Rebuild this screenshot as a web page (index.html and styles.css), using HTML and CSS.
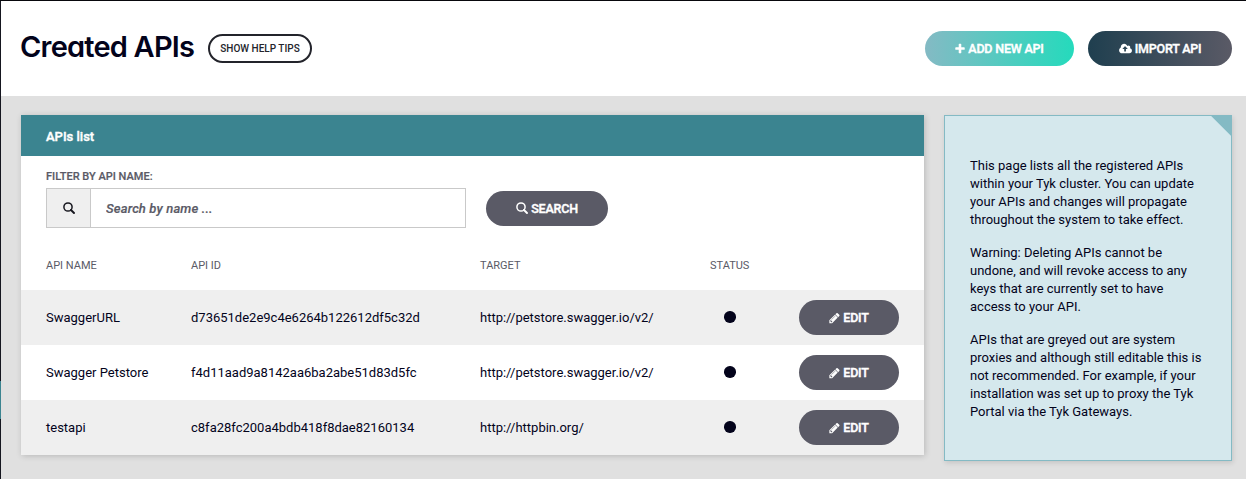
FILE: index.html
```html
<!DOCTYPE html>
<html lang="en">
<head>
<meta charset="utf-8">
<title>Created APIs</title>
<link rel="stylesheet" href="styles.css">
</head>
<body>
<svg class="sprite" aria-hidden="true">
  <symbol id="plus" viewBox="192 0 1408 1792"><path d="M1600 736v192q0 40-28 68t-68 28h-416v416q0 40-28 68t-68 28h-192q-40 0-68-28t-28-68v-416h-416q-40 0-68-28t-28-68v-192q0-40 28-68t68-28h416v-416q0-40 28-68t68-28h192q40 0 68 28t28 68v416h416q40 0 68 28t28 68z"/></symbol>
  <symbol id="search" viewBox="0 0 12 12"><circle cx="5" cy="5" r="4.100" fill="none" stroke="currentColor" stroke-width="1.500"/><path d="M8 8l3 3" fill="none" stroke="currentColor" stroke-width="1.900" stroke-linecap="round"/></symbol>
  <symbol id="pencil" viewBox="128 0 1536 1792"><path d="M491 1536l91-91-235-235-91 91v107h128v128h107zm523-928q0-22-22-22-10 0-17 7l-542 542q-7 7-7 17 0 22 22 22 10 0 17-7l542-542q7-7 7-17zm-54-192l416 416-832 832h-416v-416zm683 96q0 53-37 90l-166 166-416-416 166-165q36-38 90-38 53 0 91 38l235 234q37 39 37 91z"/></symbol>
  <symbol id="cloud" viewBox="0 0 1920 1792"><path d="M1280 864q0-14-9-23l-352-352q-9-9-23-9t-23 9l-351 351q-10 12-10 24 0 14 9 23t23 9h224v352q0 13 9.500 22.500t22.500 9.500h192q13 0 22.500-9.500t9.500-22.500v-352h224q13 0 22.500-9.500t9.500-22.500zm640 288q0 159-112.500 271.500t-271.500 112.500h-1088q-185 0-316.500-131.500t-131.500-316.500q0-130 70-240t188-165q-2-30-2-43 0-212 150-362t362-150q156 0 285.500 87t188.500 231q71-62 166-62 106 0 181 75t75 181q0 76-41 138 130 31 213.500 135.500t83.500 238.500z"/></symbol>
</svg>
<div class="page">
  <div class="rail"><span class="rail-active"></span></div>
  <div class="content">
    <header class="header">
      <h1 class="title">Created APIs</h1>
      <button class="help">SHOW HELP TIPS</button>
      <div class="actions">
        <button class="btn btn-add"><svg class="icon icon-plus"><use href="#plus"/></svg><span>ADD NEW API</span></button>
        <button class="btn btn-import"><svg class="icon icon-cloud"><use href="#cloud"/></svg><span>IMPORT API</span></button>
      </div>
    </header>
    <main class="main">
      <section class="panel">
        <h2 class="panel-head">APIs list</h2>
        <div class="filter">
          <label class="label" for="q">FILTER BY API NAME:</label>
          <div class="filter-row">
            <div class="field">
              <span class="addon"><svg class="icon icon-search"><use href="#search"/></svg></span>
              <input class="input" id="q" type="text" placeholder="Search by name ...">
            </div>
            <button class="btn btn-search"><svg class="icon icon-search"><use href="#search"/></svg><span>SEARCH</span></button>
          </div>
        </div>
        <div class="row row-head"><span>API NAME</span><span>API ID</span><span>TARGET</span><span>STATUS</span></div>
        <div class="row shaded"><span>SwaggerURL</span><span class="id">d73651de2e9c4e6264b122612df5c32d</span><span class="url">http://petstore.swagger.io/v2/</span><i class="dot"></i><button class="btn btn-edit"><svg class="icon icon-pencil"><use href="#pencil"/></svg><span>EDIT</span></button></div>
        <div class="row"><span>Swagger Petstore</span><span class="id">f4d11aad9a8142aa6ba2abe51d83d5fc</span><span class="url">http://petstore.swagger.io/v2/</span><i class="dot"></i><button class="btn btn-edit"><svg class="icon icon-pencil"><use href="#pencil"/></svg><span>EDIT</span></button></div>
        <div class="row shaded"><span>testapi</span><span class="id">c8fa28fc200a4bdb418f8dae82160134</span><span class="url">http://httpbin.org/</span><i class="dot"></i><button class="btn btn-edit"><svg class="icon icon-pencil"><use href="#pencil"/></svg><span>EDIT</span></button></div>
      </section>
      <aside class="note">
        <p>This page lists all the registered APIs<br>within your Tyk cluster. You can update<br>your APIs and changes will propagate<br>throughout the system to take effect.</p>
        <p>Warning: Deleting APIs cannot be<br>undone, and will revoke access to any<br>keys that are currently set to have<br>access to your API.</p>
        <p>APIs that are greyed out are system<br>proxies and although still editable this is<br>not recommended. For example, if your<br>installation was set up to proxy the Tyk<br>Portal via the Tyk Gateways.</p>
      </aside>
    </main>
  </div>
</div>
</body>
</html>
```
FILE: styles.css
```css
* { box-sizing: border-box; }
body { margin: 0; font-family: Roboto, "Liberation Sans", sans-serif; font-size: 13px; color: #03031b; overflow: hidden; }
.sprite { position: absolute; width: 0; height: 0; }
.page { display: flex; height: 479px; border-top: 1px solid #08080c; background: #e0e0e0; }
.rail { width: 1px; background: #15161f; padding-top: 380px; }
.rail-active { display: block; height: 38px; background: #3b8490; }
.content { flex: 1; min-width: 0; }
.header { display: flex; align-items: center; height: 95px; padding: 0 14px 0 19px; background: #fff; }
.title { margin: 0; width: 174px; font: 600 29px/36px Inter, Roboto, sans-serif; font-feature-settings: "cv11" 1; white-space: nowrap; letter-spacing: -0.8px; padding-bottom: 4px; }
.help { width: 104px; height: 29px; margin-left: 14px; padding: 0; border: 2px solid #23242b; border-radius: 15px; background: #fff; color: #23242b; font: 500 10px Roboto, sans-serif; }
.actions { display: flex; gap: 14px; margin-left: auto; }
.btn { display: flex; align-items: center; justify-content: center; gap: 3px; height: 35px; padding: 0; border: 0; border-radius: 18px; background: #5a5a66; color: #fff; font: 500 12.5px Roboto, sans-serif; letter-spacing: -0.2px; -webkit-text-stroke: 0.4px; }
.icon { display: block; height: 12px; fill: currentColor; }
.icon-plus { width: 10px; }
.icon-cloud { width: 13px; }
.icon-search { width: 12px; }
.icon-pencil { width: 11px; }
.btn-add { width: 149px; background: linear-gradient(90deg, #84bac4, #25dabc); }
.btn-import { width: 144px; background: linear-gradient(90deg, #1f3f4f, #5a5a66); }
.main { display: flex; align-items: flex-start; gap: 20px; padding: 19px 14px 0 20px; }
.panel { width: 903px; background: #fff; box-shadow: 1px 1px 6px rgba(0,0,0,.18); }
.panel-head { margin: 0; height: 41px; padding-left: 25px; background: #3b8490; color: #fff; font-size: 13px; line-height: 43px; font-weight: 500; -webkit-text-stroke: 0.4px; }
.filter { padding: 12px 25px 0; }
.label { display: block; height: 20px; font-size: 11px; line-height: 17px; font-weight: 500; color: #5a5a66; -webkit-text-stroke: 0.2px; }
.filter-row { display: flex; align-items: center; gap: 20px; }
.field { display: flex; width: 420px; height: 40px; border: 1px solid #c9c9c9; }
.addon { display: flex; align-items: center; justify-content: center; width: 44px; border-right: 1px solid #c9c9c9; background: #efefef; color: #17171f; }
.input { flex: 1; min-width: 0; border: 0; padding: 0 15px; font: italic 500 13px Roboto, sans-serif; letter-spacing: 0.15px; -webkit-text-stroke: 0.2px; background: #fff; }
.input::placeholder { color: #5a5a66; opacity: 1; }
.btn-search { width: 122px; }
.row { display: grid; grid-template-columns: 145px 289px 230px 89px 100px; align-items: center; height: 55px; padding: 0 25px; }
.row-head { height: 62px; padding-top: 13px; color: #5a5a66; font-size: 11px; }
.shaded { background: #efefef; }
.dot { width: 11.5px; height: 11.5px; margin-left: 14px; margin-bottom: 1px; border-radius: 50%; background: #03031b; }
.note { width: 288px; height: 346px; padding: 41px 0 0 25px; border: 1px solid #84bac4; background: linear-gradient(45deg, transparent 49%, #84bac4 52%) top right / 20px 20px no-repeat, #d5e8ed; box-shadow: 1px 2px 5px rgba(0,0,0,.12); line-height: 18px; white-space: nowrap; }
.note p { margin: 0 0 15px; }
```
